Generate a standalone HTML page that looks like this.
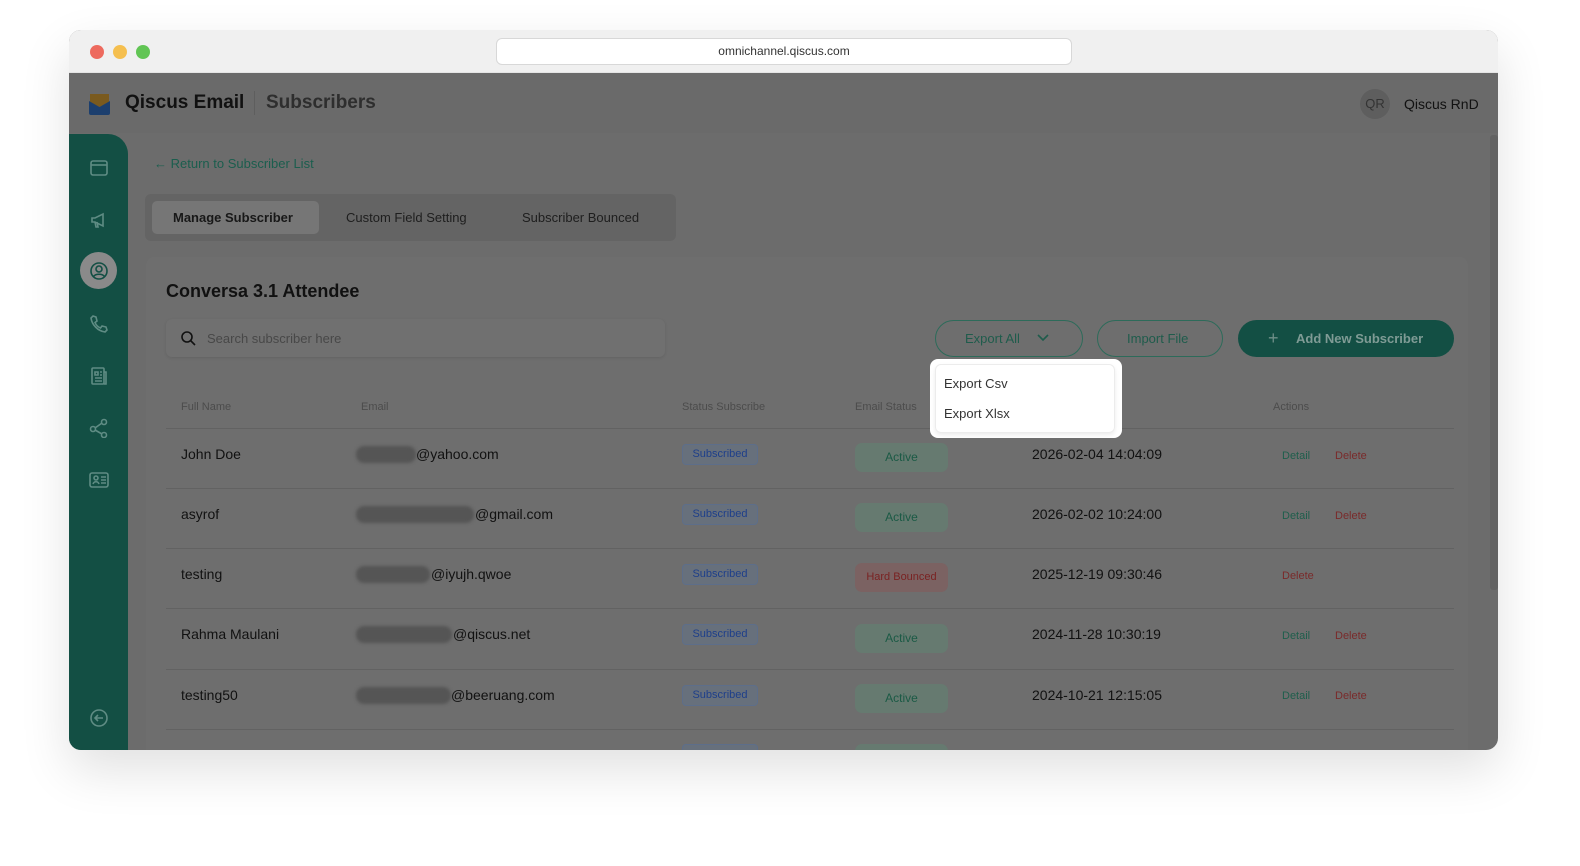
<!DOCTYPE html>
<html><head><meta charset="utf-8"><style>
*{box-sizing:border-box;margin:0;padding:0}
body{width:1580px;height:866px;background:#fff;font-family:"Liberation Sans",sans-serif;position:relative;overflow:hidden}
.win{position:absolute;left:69px;top:30px;width:1429px;height:720px;border-radius:12px;overflow:hidden;background:#6c6c6c;box-shadow:0 20px 50px rgba(0,0,0,.12)}
.tb{position:absolute;left:0;top:0;width:100%;height:43px;background:#f0f0f0;border-bottom:1px solid #e4e4e4}
.dot{position:absolute;top:15px;width:14px;height:14px;border-radius:50%}
.url{position:absolute;left:427px;top:8px;width:576px;height:27px;background:#fff;border:1px solid #d8d8d8;border-radius:6px;font-size:12px;color:#333;text-align:center;line-height:25px}
.hdr{position:absolute;left:0;top:43px;width:100%;height:60px;background:#6a6a6a}
.side{position:absolute;left:0;top:104px;width:59px;height:616px;background:#134f44;border-top-right-radius:20px}
.a{position:absolute;white-space:nowrap}
.t{color:#111;font-size:14px}
.th{color:#4c4c4c;font-size:11px}
.line{position:absolute;left:97px;width:1288px;height:1px;background:#626262}
.badge{position:absolute;width:76px;height:21px;border:1px solid #5d6e8a;border-radius:4px;background:#67707c;color:#1e3f8a;font-size:11px;text-align:center;line-height:19px}
.st{position:absolute;width:93px;height:29px;border-radius:7px;background:#667a70;color:#1b5a45;font-size:12px;text-align:center;line-height:29px}
.blur{position:absolute;height:17px;background:#555;border-radius:8px;filter:blur(1.5px)}
.ic{position:absolute;left:20px;width:20px;height:20px;stroke:#5f8c84;fill:none;stroke-width:1.6}
</style></head><body>
<div class="win">
<div class="tb">
<div class="dot" style="left:21px;background:#ed6a5e"></div>
<div class="dot" style="left:44px;background:#f5bf4f"></div>
<div class="dot" style="left:67px;background:#61c554"></div>
<div class="url">omnichannel.qiscus.com</div>
</div>
<div class="hdr">
<svg style="position:absolute;left:20px;top:20px" width="21" height="22" viewBox="0 0 21 22"><path d="M1 1h19v8l-9.5 5L1 9z" fill="#7a5a1e"/><path d="M0 8l10.5 6L21 8v12a2 2 0 0 1-2 2H2a2 2 0 0 1-2-2z" fill="#1c3f6e"/></svg>
<div class="a" style="left:56px;top:19px;font-size:19px;font-weight:bold;color:#111">Qiscus Email</div>
<div style="position:absolute;left:185px;top:18px;width:1px;height:24px;background:#5e5e5e"></div>
<div class="a" style="left:197px;top:19px;font-size:19px;font-weight:bold;color:#2e2e2e">Subscribers</div>
<div style="position:absolute;left:1291px;top:16px;width:30px;height:30px;border-radius:50%;background:#5e5e5e;color:#333;font-size:13px;text-align:center;line-height:30px">QR</div>
<div class="a t" style="left:1335px;top:23px;font-size:14px">Qiscus RnD</div>
</div>
<div style="position:absolute;left:1421px;top:105px;width:8px;height:455px;background:#626262;border-radius:3px"></div>
<div class="side">
<svg class="ic" style="top:24px" viewBox="0 0 20 20"><rect x="2" y="3" width="16" height="14" rx="2"/><path d="M2 7h16"/></svg>
<svg class="ic" style="top:76px" viewBox="0 0 20 20"><path d="M3 8v4h3l8 4V4L6 8zM6 12l1 5h2l-1-5"/></svg>
<div style="position:absolute;left:11px;top:118px;width:37px;height:37px;border-radius:50%;background:#8a8a8a"></div>
<svg class="ic" style="top:127px;stroke:#134f44" viewBox="0 0 20 20"><circle cx="10" cy="10" r="8"/><circle cx="10" cy="8" r="3"/><path d="M4.5 15.5c2-3 9-3 11 0"/></svg>
<svg class="ic" style="top:180px" viewBox="0 0 20 20"><path d="M4 2l3 1 1 4-2 1.5c1 2.5 3 4.5 5.5 5.5L13 12l4 1 1 3-2 2C9 17 3 11 2 4z"/></svg>
<svg class="ic" style="top:232px" viewBox="0 0 20 20"><rect x="3" y="2" width="12" height="16" rx="1"/><path d="M15 6h2v12h-2M6 6h3v3H6zM11 6h2M11 9h2M6 12h7M6 15h7"/></svg>
<svg class="ic" style="top:284px" viewBox="0 0 20 20"><circle cx="4" cy="11" r="2.5"/><circle cx="15" cy="4" r="2.5"/><circle cx="15" cy="17" r="2.5"/><path d="M6 10l7-5M6 12l7 4"/></svg>
<svg class="ic" style="top:336px" viewBox="0 0 20 20"><rect x="1" y="3" width="18" height="14" rx="2"/><circle cx="7" cy="8" r="2"/><path d="M4 14c1-3 5-3 6 0M12 7h5M12 10h5M12 13h5"/></svg>
<svg class="ic" style="top:574px" viewBox="0 0 20 20"><circle cx="10" cy="10" r="8"/><path d="M14 10H6M9 7l-3 3 3 3"/></svg>
</div>
<div class="a" style="left:85px;top:126px;color:#1b5e4e;font-size:13px">← Return to Subscriber List</div>
<div style="position:absolute;left:76px;top:164px;width:531px;height:47px;background:#646464;border-radius:6px"></div>
<div style="position:absolute;left:83px;top:171px;width:167px;height:33px;background:#767676;border-radius:5px"></div>
<div class="a t" style="left:104px;top:180px;font-size:13px;font-weight:bold;color:#181818">Manage Subscriber</div>
<div class="a t" style="left:277px;top:180px;font-size:13px;color:#1e1e1e">Custom Field Setting</div>
<div class="a t" style="left:453px;top:180px;font-size:13px;color:#1e1e1e">Subscriber Bounced</div>
<div style="position:absolute;left:77px;top:227px;width:1322px;height:500px;background:#6e6e6e;border-radius:8px"></div>
<div class="a" style="left:97px;top:251px;font-size:18px;font-weight:bold;color:#111">Conversa 3.1 Attendee</div>
<div style="position:absolute;left:97px;top:289px;width:499px;height:38px;background:#707070;border-radius:6px;box-shadow:0 1px 3px rgba(0,0,0,.1)"></div>
<svg style="position:absolute;left:111px;top:300px" width="16" height="16" viewBox="0 0 16 16" fill="none" stroke="#111" stroke-width="1.6"><circle cx="7" cy="7" r="5"/><path d="M11 11l4 4"/></svg>
<div class="a" style="left:138px;top:301px;font-size:13px;color:#484848">Search subscriber here</div>
<div style="position:absolute;left:866px;top:290px;width:148px;height:37px;border:1.5px solid #2d6b5a;border-radius:19px"></div>
<div class="a" style="left:896px;top:301px;font-size:13px;color:#1f5c4c">Export All</div>
<svg style="position:absolute;left:967px;top:303px" width="14" height="10" viewBox="0 0 14 10" fill="none" stroke="#1f5c4c" stroke-width="1.6"><path d="M2 2l5 5 5-5"/></svg>
<div style="position:absolute;left:1028px;top:290px;width:126px;height:37px;border:1.5px solid #2d6b5a;border-radius:19px"></div>
<div class="a" style="left:1058px;top:301px;font-size:13px;color:#1f5c4c">Import File</div>
<div style="position:absolute;left:1169px;top:290px;width:216px;height:37px;background:#134f44;border-radius:19px"></div>
<div class="a" style="left:1199px;top:298px;font-size:18px;color:#6e8f88">+</div>
<div class="a" style="left:1227px;top:301px;font-size:13px;font-weight:bold;color:#7f9b95">Add New Subscriber</div>
<div class="a th" style="left:112px;top:371px">Full Name</div>
<div class="a th" style="left:292px;top:371px">Email</div>
<div class="a th" style="left:613px;top:371px">Status Subscribe</div>
<div class="a th" style="left:786px;top:371px">Email Status</div>
<div class="a th" style="left:1204px;top:371px">Actions</div>
<div class="line" style="top:398px"></div>
<div class="line" style="top:458px"></div>
<div class="line" style="top:518px"></div>
<div class="line" style="top:578px"></div>
<div class="line" style="top:639px"></div>
<div class="line" style="top:699px"></div>

<div class="a t" style="left:112px;top:416px">John Doe</div>
<div class="blur" style="left:287px;top:416px;width:60px"></div><div class="a t" style="left:347px;top:416px">@yahoo.com</div>
<div class="badge" style="left:613px;top:414px">Subscribed</div>
<div class="st" style="left:786px;top:413px">Active</div>
<div class="a t" style="left:963px;top:416px">2026-02-04 14:04:09</div>
<div class="a" style="left:1213px;top:420px;font-size:11px;color:#1f5e4c">Detail</div><div class="a" style="left:1266px;top:420px;font-size:11px;color:#7a2a2a">Delete</div>

<div class="a t" style="left:112px;top:476px">asyrof</div>
<div class="blur" style="left:287px;top:476px;width:118px"></div><div class="a t" style="left:406px;top:476px">@gmail.com</div>
<div class="badge" style="left:613px;top:474px">Subscribed</div>
<div class="st" style="left:786px;top:473px">Active</div>
<div class="a t" style="left:963px;top:476px">2026-02-02 10:24:00</div>
<div class="a" style="left:1213px;top:480px;font-size:11px;color:#1f5e4c">Detail</div><div class="a" style="left:1266px;top:480px;font-size:11px;color:#7a2a2a">Delete</div>

<div class="a t" style="left:112px;top:536px">testing</div>
<div class="blur" style="left:287px;top:536px;width:74px"></div><div class="a t" style="left:362px;top:536px">@iyujh.qwoe</div>
<div class="badge" style="left:613px;top:534px">Subscribed</div>
<div class="st" style="left:786px;top:533px;background:#7b6262;color:#7a2222;font-size:11px">Hard Bounced</div>
<div class="a t" style="left:963px;top:536px">2025-12-19 09:30:46</div>
<div class="a" style="left:1213px;top:540px;font-size:11px;color:#7a2a2a">Delete</div>

<div class="a t" style="left:112px;top:596px">Rahma Maulani</div>
<div class="blur" style="left:287px;top:596px;width:96px"></div><div class="a t" style="left:384px;top:596px">@qiscus.net</div>
<div class="badge" style="left:613px;top:594px">Subscribed</div>
<div class="st" style="left:786px;top:594px">Active</div>
<div class="a t" style="left:963px;top:596px">2024-11-28 10:30:19</div>
<div class="a" style="left:1213px;top:600px;font-size:11px;color:#1f5e4c">Detail</div><div class="a" style="left:1266px;top:600px;font-size:11px;color:#7a2a2a">Delete</div>

<div class="a t" style="left:112px;top:657px">testing50</div>
<div class="blur" style="left:287px;top:657px;width:95px"></div><div class="a t" style="left:382px;top:657px">@beeruang.com</div>
<div class="badge" style="left:613px;top:655px">Subscribed</div>
<div class="st" style="left:786px;top:654px">Active</div>
<div class="a t" style="left:963px;top:657px">2024-10-21 12:15:05</div>
<div class="a" style="left:1213px;top:660px;font-size:11px;color:#1f5e4c">Detail</div><div class="a" style="left:1266px;top:660px;font-size:11px;color:#7a2a2a">Delete</div>

<div class="badge" style="left:613px;top:714px"></div>
<div class="st" style="left:786px;top:714px"></div>

<div style="position:absolute;left:861px;top:329px;width:192px;height:79px;background:#fff;border-radius:8px"></div>
<div style="position:absolute;left:866px;top:334px;width:180px;height:69px;border:1px solid #ececec;border-radius:6px;box-shadow:0 2px 4px rgba(0,0,0,.08)"></div>
<div class="a" style="left:875px;top:346px;font-size:13px;color:#333">Export Csv</div>
<div class="a" style="left:875px;top:376px;font-size:13px;color:#333">Export Xlsx</div>
</div>
</body></html>
